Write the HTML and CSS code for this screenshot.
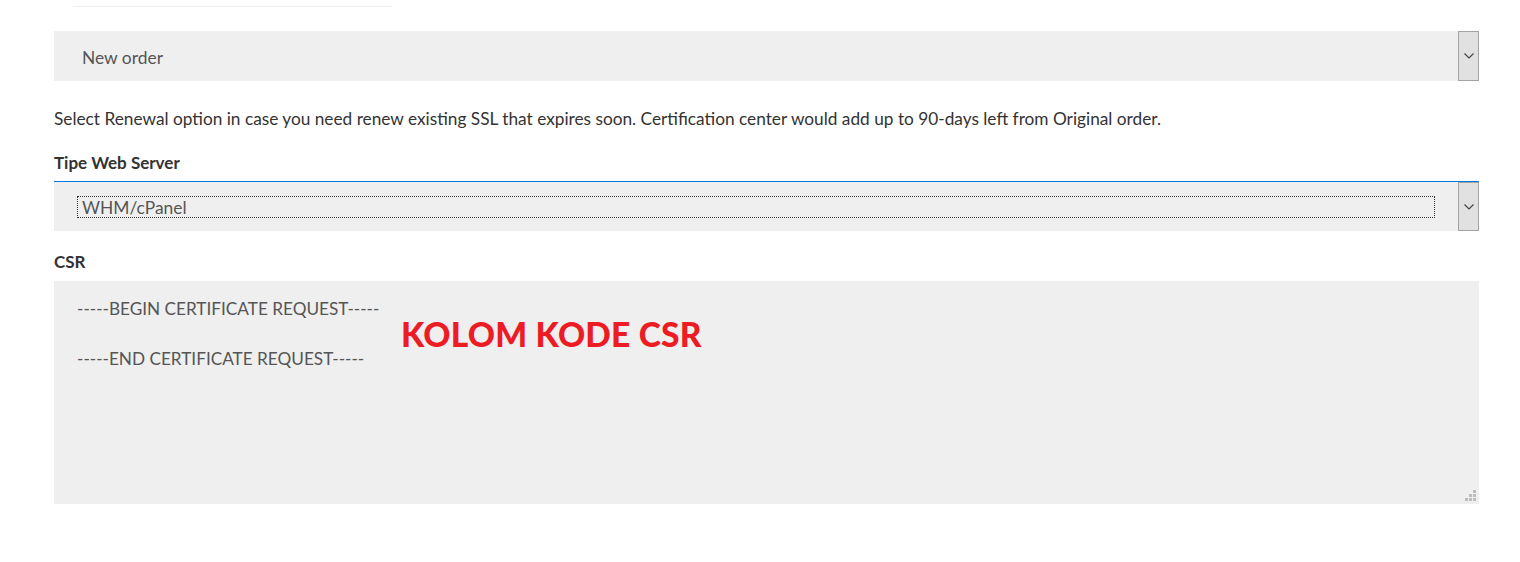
FILE: index.html
```html
<!DOCTYPE html>
<html>
<head>
<meta charset="utf-8">
<link rel="stylesheet" href="styles.css">
</head>
<body>
<div class="page">
  <div class="topbox"></div>
  <div class="select first">
    <div class="select-value"><span class="value-text">New order</span></div>
    <div class="select-btn"><svg width="10" height="6" viewBox="0 0 10 6"><path d="M0.5 0.5 L5 5 L9.5 0.5" fill="none" stroke="#444" stroke-width="1.2"/></svg></div>
  </div>
  <p class="hint">Select Renewal option in case you need renew existing SSL that expires soon. Certification center would add up to 90-days left from Original order.</p>
  <div class="label">Tipe Web Server</div>
  <div class="select focused">
    <div class="select-value"><span class="focus-rect">WHM/cPanel</span></div>
    <div class="select-btn"><svg width="10" height="6" viewBox="0 0 10 6"><path d="M0.5 0.5 L5 5 L9.5 0.5" fill="none" stroke="#444" stroke-width="1.2"/></svg></div>
  </div>
  <div class="label csr-label">CSR</div>
  <div class="textarea">
    <div class="csr-line">-----BEGIN CERTIFICATE REQUEST-----</div>
    <div class="csr-line blank">&nbsp;</div>
    <div class="csr-line">-----END CERTIFICATE REQUEST-----</div>
    <div class="annotation">KOLOM KODE CSR</div>
    <svg class="resizer" width="11" height="11" viewBox="0 0 11 11">
      <rect x="8" y="0" width="3" height="3" fill="#bdbdbd"/>
      <rect x="4" y="4" width="3" height="3" fill="#bdbdbd"/>
      <rect x="8" y="4" width="3" height="3" fill="#bdbdbd"/>
      <rect x="0" y="8" width="3" height="3" fill="#bdbdbd"/>
      <rect x="4" y="8" width="3" height="3" fill="#bdbdbd"/>
      <rect x="8" y="8" width="3" height="3" fill="#bdbdbd"/>
    </svg>
  </div>
</div>
</body>
</html>
```

FILE: styles.css
```css
html, body {
  margin: 0;
  padding: 0;
  background: #fff;
}
body {
  font-family: Lato, "Open Sans", sans-serif;
  color: #333;
  font-size: 17.2px;
}
.page {
  padding: 0 41px 0 54px;
}
.topbox {
  margin-left: 19px;
  width: 319px;
  height: 6px;
  border-bottom: 1px solid #f0f0f0;
  margin-bottom: 24px;
}
.select {
  display: flex;
  height: 50px;
  background: #efefef;
}
.select.focused {
  border-top: 1px solid #0078d7;
  height: 49px;
}
.select-value {
  flex: 1;
  display: flex;
  align-items: center;
  padding-left: 23px;
  padding-right: 23px;
}
.value-text {
  font-size: 17.4px;
  color: #555;
  padding-left: 5px;
  margin-top: 3px;
}
.focus-rect {
  flex: 1;
  border: 1px dotted #333;
  font-size: 17.4px;
  color: #555;
  line-height: 19px;
  padding-left: 4px;
  padding-top: 1px;
  height: 19px;
  box-sizing: content-box;
  margin-top: 0;
}
.select-btn {
  width: 19px;
  background: #e1e1e1;
  border: 1px solid #a3a3a3;
  display: flex;
  align-items: center;
  justify-content: center;
}
.hint {
  margin: 0;
  padding-top: 27px;
  line-height: 22px;
  font-size: 17.25px;
  color: #333;
}
.label {
  font-weight: bold;
  font-size: 17px;
  margin-top: 22px;
  line-height: 22px;
  margin-bottom: 7px;
}
.csr-label {
  margin-top: 20px;
  margin-bottom: 8px;
}
.textarea {
  position: relative;
  background: #efefef;
  height: 223px;
  padding: 15px 23px 14px;
  box-sizing: border-box;
}
.csr-line {
  font-size: 17.2px;
  line-height: 25px;
  color: #555;
}
.annotation {
  position: absolute;
  left: 347px;
  top: 32px;
  font-family: Lato, "Open Sans", sans-serif;
  font-weight: 900;
  font-size: 33.6px;
  color: #ed1c24;
  letter-spacing: 0.2px;
  line-height: 42px;
}
.resizer {
  position: absolute;
  right: 3px;
  bottom: 3px;
}
```
